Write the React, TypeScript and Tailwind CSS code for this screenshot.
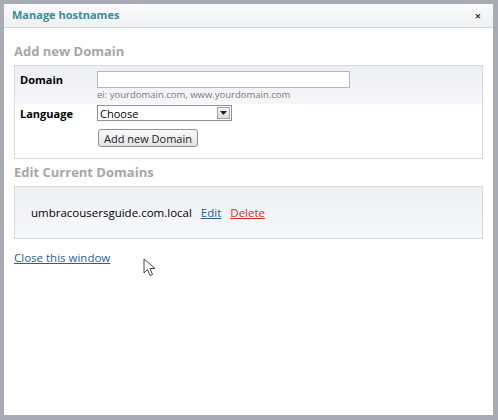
import React from 'react';

const font = { fontFamily: '"Open Sans", "Noto Sans", sans-serif' };

const Cursor = () => (
  <svg className="absolute left-[139px] top-[254px]" width="14" height="20" viewBox="0 0 14 20">
    <path d="M1 1 L1 15 L4.5 11.5 L7 17.5 L9.5 16.5 L7 10.5 L12 10.5 Z" fill="#fff" stroke="#444" strokeWidth="1" strokeLinejoin="round" />
  </svg>
);

export default function App() {
  return (
    <div className="w-[498px] h-[420px] bg-[#a9acb4] pt-[4px] pl-[4px] pr-[5px] pb-[5px] text-black" style={font}>
      <div className="relative w-full h-full bg-white flex flex-col">
        <div className="h-[24px] flex items-center justify-between pl-[8px] pr-[12px] border-b border-[#d4d6dc] bg-gradient-to-b from-[#fbfbfc] to-[#eef0f3]">
          <span className="text-[11px] font-bold text-[#3a8a99]">Manage hostnames</span>
          <span className="text-[11px] font-bold text-[#333] leading-none">×</span>
        </div>

        <div className="px-[10px] pt-[14px]">
          <h2 className="text-[13px] font-bold text-[#a6a6a6] leading-[18px]">Add new Domain</h2>
          <div className="mt-[5px] border border-[#d8d9de]">
            <div className="bg-gradient-to-b from-[#eeeef6] to-[#f6f6fa] pt-[5px] pb-[3px] flex">
              <div className="w-[82px] pl-[5px] pt-[1px] text-[11px] font-bold">Domain</div>
              <div className="flex flex-col">
                <input className="w-[253px] h-[17px] border border-[#b5b7bd] bg-white" />
                <span className="text-[9.5px] text-[#7a7a7a] leading-[12px] mt-[1px]">ei: yourdomain.com, www.yourdomain.com</span>
              </div>
            </div>
            <div className="flex pt-[1px] pb-[11px]">
              <div className="w-[82px] pl-[5px] pt-[1px] text-[11px] font-bold">Language</div>
              <div className="flex flex-col gap-[8px]">
                <div className="w-[135px] h-[16px] border border-[#8f9197] bg-white flex items-center justify-between">
                  <span className="text-[11px] pl-[2px] leading-none">Choose</span>
                  <span className="w-[13px] h-[12px] mr-[1px] border border-[#a0a2a8] bg-gradient-to-b from-[#f4f4f6] to-[#dcdde2] flex items-center justify-center">
                    <svg width="7" height="4" viewBox="0 0 7 4"><path d="M0 0 L7 0 L3.5 4 Z" fill="#222" /></svg>
                  </span>
                </div>
                <button className="ml-[1px] w-[100px] h-[18px] border border-[#8f9197] rounded-[3px] bg-gradient-to-b from-[#fafafa] to-[#e2e3e6] text-[11px] leading-none text-[#222]">
                  Add new Domain
                </button>
              </div>
            </div>
          </div>

          <h2 className="mt-[4px] text-[13px] font-bold text-[#a6a6a6] leading-[18px]">Edit Current Domains</h2>
          <div className="mt-[5px] h-[53px] border border-[#d8d9de] bg-gradient-to-b from-[#eef0f4] to-[#f7f8fa] flex items-center pl-[16px] gap-[9px] text-[11.5px]">
            <span>umbracousersguide.com.local</span>
            <a className="text-[#2d5b9c] underline cursor-pointer">Edit</a>
            <a className="text-[#d82a2a] underline cursor-pointer">Delete</a>
          </div>

          <a className="inline-block mt-[10px] text-[11.5px] text-[#2d5b9c] underline cursor-pointer">Close this window</a>
        </div>
        <Cursor />
      </div>
    </div>
  );
}
